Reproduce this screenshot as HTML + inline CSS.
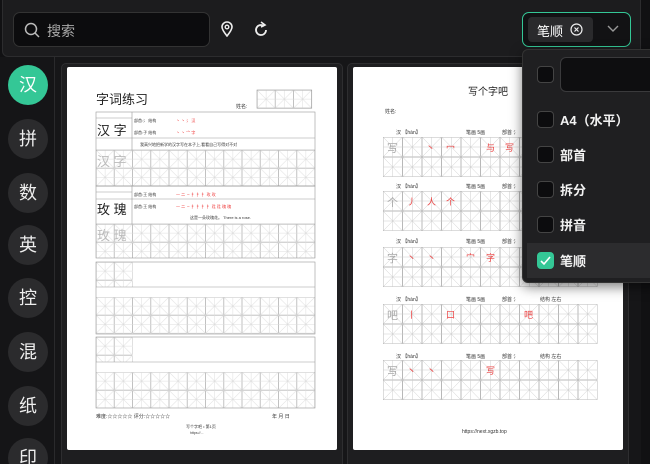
<!DOCTYPE html>
<html><head><meta charset="utf-8"><style>
*{margin:0;padding:0;box-sizing:border-box}
html,body{width:650px;height:464px;overflow:hidden}
body{background:#111113;font-family:"Liberation Sans","Noto Sans CJK SC",sans-serif;position:relative;color:#eee}
.top{position:absolute;left:2px;top:0;width:639px;height:57px;background:#1c1c1e;border:1px solid #2c2c2e;border-top:none;border-radius:0 0 6px 6px}
.search{position:absolute;left:10px;top:12px;width:197px;height:35px;background:#0c0c0e;border:1px solid #333;border-radius:7px}
.search span{position:absolute;left:33px;top:8px;font-size:14px;color:#aaa}
.sel{position:absolute;left:519px;top:12px;width:109px;height:35px;border:1.5px solid #34c796;border-radius:7px;background:#121214}
.tag{position:absolute;left:5px;top:4px;width:65px;height:25px;background:#2a2a2c;border-radius:4px;font-size:13px;color:#fff;padding:4px 0 0 9px}
.side{position:absolute;left:0;top:57px;width:55px;height:407px;background:#151517;border-right:1px solid #2a2a2c}
.c{position:absolute;left:8px;width:40px;height:40px;border-radius:50%;background:#2b2b2d;color:#eee;font-size:18px;text-align:center;line-height:40px}
.main{position:absolute;left:55px;top:57px;width:586px;height:407px;background:#161618}
.card{position:absolute;top:63px;height:410px;background:#1e1e20;border:1px solid #2e2e30;border-radius:5px}
.dd{position:absolute;left:522px;top:49px;width:140px;height:234px;background:#1f1f21;border:1px solid #333;border-radius:6px;box-shadow:0 4px 12px rgba(0,0,0,.5)}
.opt{position:absolute;left:0;width:140px;height:35px;font-size:13px;color:#f2f2f2}
.cb{position:absolute;left:14px;top:9px;width:17px;height:17px;border:1px solid #444;border-radius:4px;background:#0c0c0e}
.opt b{position:absolute;left:37px;top:8px;font-weight:bold}
</style></head><body>
<div class="top">
<div class="search"><svg style="position:absolute;left:10px;top:9px" width="16" height="16" viewBox="0 0 16 16"><circle cx="7" cy="7" r="5.5" fill="none" stroke="#bbb" stroke-width="1.5"/><path d="M11 11l4 4" stroke="#bbb" stroke-width="1.5"/></svg><span>搜索</span></div>
<svg style="position:absolute;left:217px;top:21px" width="14" height="16" viewBox="0 0 14 16"><path d="M7 15C3 10 2 8 2 6a5 5 0 0 1 10 0c0 2-1 4-5 9z" fill="none" stroke="#eee" stroke-width="1.6"/><circle cx="7" cy="6" r="1.8" fill="none" stroke="#eee" stroke-width="1.4"/></svg>
<svg style="position:absolute;left:251px;top:21px" width="14" height="16" viewBox="0 0 14 16"><path d="M10 5A5 5 0 1 0 12 9" fill="none" stroke="#eee" stroke-width="1.8"/><path d="M7 1l4 3-4 2" fill="none" stroke="#eee" stroke-width="1.6"/></svg>
<div class="sel"><div class="tag">笔顺 <svg style="position:absolute;left:42px;top:6px" width="13" height="13" viewBox="0 0 13 13"><circle cx="6.5" cy="6.5" r="5.5" fill="none" stroke="#eee" stroke-width="1.2"/><path d="M4.5 4.5l4 4M8.5 4.5l-4 4" stroke="#eee" stroke-width="1.2"/></svg></div>
<svg style="position:absolute;left:84px;top:12px" width="12" height="8" viewBox="0 0 12 8"><path d="M1 1l5 5 5-5" fill="none" stroke="#999" stroke-width="1.4"/></svg></div>
</div>
<div class="side">
<div class="c" style="top:8px;background:#34c796;color:#fff">汉</div>
<div class="c" style="top:62px">拼</div>
<div class="c" style="top:116px">数</div>
<div class="c" style="top:168px">英</div>
<div class="c" style="top:221px">控</div>
<div class="c" style="top:275px">混</div>
<div class="c" style="top:329px">纸</div>
<div class="c" style="top:381px">印</div>
</div>
<div class="main"></div>
<div class="card" style="left:61px;width:282px"></div>
<div class="card" style="left:347px;width:282px"></div>
<svg style="position:absolute;left:0;top:0" width="650" height="464" viewBox="0 0 650 464">
<defs>
<pattern id="mi" width="18.25" height="18.2" patternUnits="userSpaceOnUse"><rect width="18.25" height="18.2" fill="none" stroke="#999" stroke-width=".6"/><path d="M0 0L18.25 18.2M18.25 0L0 18.2M9.1 0V18.2M0 9.1H18.25" stroke="#ddd" stroke-width=".5"/></pattern>
<pattern id="mi2" width="19.5" height="20" patternUnits="userSpaceOnUse"><rect width="19.5" height="20" fill="none" stroke="#888" stroke-width=".6"/><path d="M0 0L19.5 20M19.5 0L0 20M9.75 0V20M0 10H19.5" stroke="#ccc" stroke-width=".5"/></pattern>
</defs>
<rect x="67" y="67" width="270" height="383" fill="#fff" rx="2"/>
<rect x="353" y="67" width="270" height="383" fill="#fff" rx="2"/>
<g font-family="Liberation Sans,Noto Sans CJK SC,sans-serif">
<text x="96" y="104" font-size="13" fill="#222">字词练习</text>
<text x="236" y="108" font-size="5" fill="#333">姓名:</text>
<g transform="translate(257,90)"><rect width="54.75" height="18.2" fill="url(#mi)" stroke="#999" stroke-width=".6"/></g>
<g transform="translate(96,150)"><rect width="219" height="36.4" fill="url(#mi)"/></g>
<g transform="translate(96,224)"><rect width="219" height="34" fill="url(#mi)"/></g>
<g transform="translate(96,297)"><rect width="219" height="36.4" fill="url(#mi)"/></g>
<g transform="translate(96,372)"><rect width="219" height="36" fill="url(#mi)"/></g>
<g transform="translate(96,262)"><rect width="36.5" height="25" fill="url(#mi)"/></g>
<g transform="translate(96,337)"><rect width="36.5" height="25" fill="url(#mi)"/></g>
<g stroke="#999" stroke-width=".6" fill="none">
<rect x="96" y="112" width="219" height="74"/><rect x="96" y="186" width="219" height="72"/>
<rect x="96" y="262" width="219" height="72"/><rect x="96" y="337" width="219" height="71"/>
<path d="M96 138H315M132 112V150M96 150H315M96 199H315M96 224H315M132 186V224M96 287H315M96 362H315M96 118H132M96 192H132"/>
</g>
<text x="97" y="135" font-size="13" fill="#222">汉 字</text>
<text x="97" y="166" font-size="13" fill="#bbb">汉 字</text>
<text x="97" y="214" font-size="13" fill="#222">玫 瑰</text>
<text x="97" y="240" font-size="13" fill="#bbb">玫 瑰</text>
<text x="134" y="122" font-size="4" fill="#333">部首:氵 结构</text><text x="176" y="122" font-size="4" fill="#e33">丶 丶 氵 汉</text>
<text x="134" y="134" font-size="4" fill="#333">部首:子 结构</text><text x="176" y="134" font-size="4" fill="#e33">丶 丶 宀 字</text>
<text x="140" y="146" font-size="4" fill="#333">我高兴地把新学的汉字写在本子上,看看自己写得对不对</text>
<text x="134" y="196" font-size="4" fill="#333">部首:王 结构</text><text x="176" y="196" font-size="4" fill="#e33">一 二 ㇀ 扌 扌 扌 玫 玫</text>
<text x="134" y="208" font-size="4" fill="#333">部首:王 结构</text><text x="176" y="208" font-size="4" fill="#e33">一 二 ㇀ 扌 扌 扌 扌 珄 珄 瑰 瑰</text>
<text x="190" y="219" font-size="4" fill="#333">这是一朵玫瑰花。 There is a rose.</text>
<text x="96" y="418" font-size="5" fill="#333">难度:☆☆☆☆☆  评分:☆☆☆☆☆</text>
<text x="272" y="418" font-size="5" fill="#333">年    月    日</text>
<text x="186" y="428" font-size="4" fill="#333">写个字吧 • 第1页</text>
<text x="190" y="434" font-size="3.5" fill="#333">https://...</text>
<text x="468" y="95" font-size="10" fill="#222">写个字吧</text>
<text x="385" y="113" font-size="5" fill="#333">姓名:</text>
<g font-size="5" fill="#333">
<text x="396" y="134">汉 【hàn】</text><text x="466" y="134">笔画 5画</text><text x="502" y="134">部首 氵</text><text x="540" y="134">结构 左右</text>
<text x="396" y="188">汉 【hàn】</text><text x="466" y="188">笔画 5画</text><text x="502" y="188">部首 氵</text><text x="540" y="188">结构 左右</text>
<text x="396" y="243">汉 【hàn】</text><text x="466" y="243">笔画 5画</text><text x="502" y="243">部首 氵</text><text x="540" y="243">结构 左右</text>
<text x="396" y="301">汉 【hàn】</text><text x="466" y="301">笔画 5画</text><text x="502" y="301">部首 氵</text><text x="540" y="301">结构 左右</text>
<text x="396" y="358">汉 【hàn】</text><text x="466" y="358">笔画 5画</text><text x="502" y="358">部首 氵</text><text x="540" y="358">结构 左右</text>
</g>
<g transform="translate(383,137)"><rect width="214.5" height="40" fill="url(#mi2)"/></g>
<g transform="translate(383,191)"><rect width="214.5" height="40" fill="url(#mi2)"/></g>
<g transform="translate(383,247)"><rect width="214.5" height="40" fill="url(#mi2)"/></g>
<g transform="translate(383,304)"><rect width="214.5" height="40" fill="url(#mi2)"/></g>
<g transform="translate(383,360)"><rect width="214.5" height="40" fill="url(#mi2)"/></g>
<g font-size="11" fill="#aaa"><text x="387" y="152">写</text><text x="387" y="206">个</text><text x="387" y="262">字</text><text x="387" y="319">吧</text><text x="387" y="375">写</text></g>
<g font-size="9" fill="#e44"><text x="426" y="151">丶</text><text x="446" y="151">冖</text><text x="486" y="151">与</text><text x="505" y="151">写</text>
<text x="407" y="205">丿</text><text x="427" y="205">人</text><text x="446" y="205">个</text>
<text x="407" y="261">丶</text><text x="427" y="261">丶</text><text x="466" y="261">宀</text><text x="486" y="261">字</text>
<text x="407" y="318">丨</text><text x="446" y="318">口</text><text x="524" y="318">吧</text>
<text x="407" y="374">丶</text><text x="427" y="374">丶</text><text x="486" y="374">写</text></g>
<text x="462" y="433" font-size="5" fill="#333">https://next.xgzb.top</text>
</g>
</svg>
<div class="dd">
<div class="opt" style="top:7px"><div class="cb"></div><div style="position:absolute;left:37px;top:0;width:110px;height:35px;border:1px solid #3a3a3c;border-radius:6px;background:#0e0e10"></div></div>
<div class="opt" style="top:52px"><div class="cb"></div><b>A4（水平）</b></div>
<div class="opt" style="top:87px"><div class="cb"></div><b>部首</b></div>
<div class="opt" style="top:122px"><div class="cb"></div><b>拆分</b></div>
<div class="opt" style="top:157px"><div class="cb"></div><b>拼音</b></div>
<div class="opt" style="top:193px;background:#2c2c2e;left:4px"><div class="cb" style="left:10px;background:#34c796;border-color:#34c796"><svg width="15" height="15" viewBox="0 0 15 15" style="position:absolute;left:0;top:0"><path d="M3 8l3 3 6-7" fill="none" stroke="#fff" stroke-width="1.6"/></svg></div><b style="left:33px">笔顺</b></div>
</div>
</body></html>
